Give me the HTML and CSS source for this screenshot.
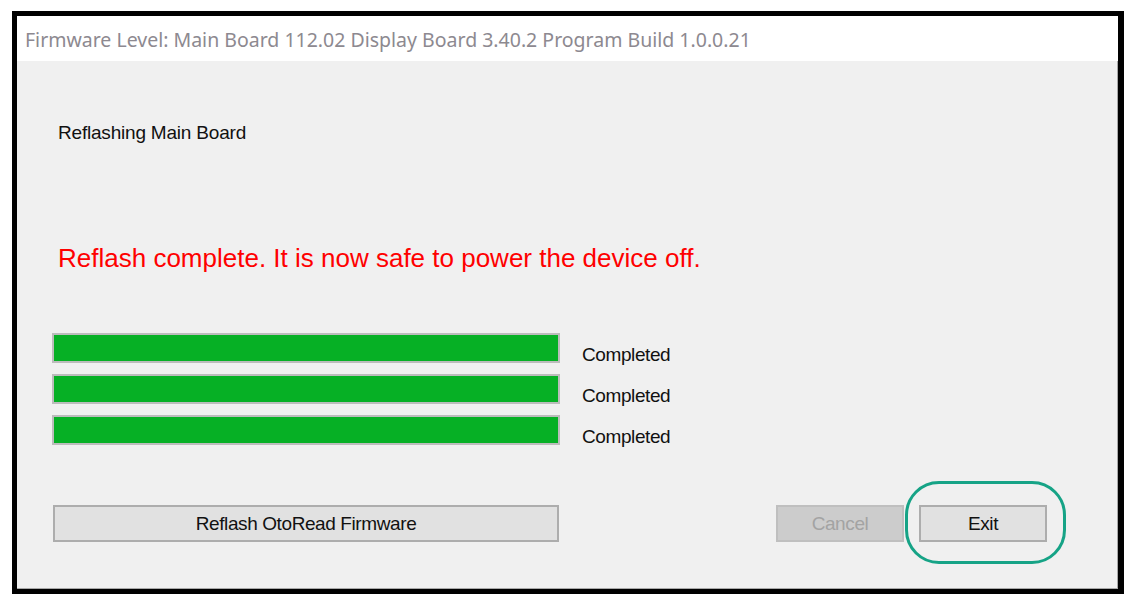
FILE: index.html
```html
<!DOCTYPE html>
<html lang="en">

<head>
    <meta charset="UTF-8" />
    <meta name="viewport" content="width=device-width, initial-scale=1.0" />
    <title>Firmware Reflash</title>
    <link rel="stylesheet" href="styles.css">
</head>

<body>
    <div class="frame">
        <div class="window">
            <div class="titlebar">Firmware Level: Main Board 112.02 Display Board 3.40.2 Program Build 1.0.0.21</div>
            <div class="content">
                <p class="status">Reflashing Main Board</p>
                <p class="done">Reflash complete. It is now safe to power the device off.</p>

                <div class="progress-list">
                    <div class="progress-row">
                        <div class="bar"><div class="fill" style="width: 100%"></div></div>
                        <span class="label">Completed</span>
                    </div>
                    <div class="progress-row">
                        <div class="bar"><div class="fill" style="width: 100%"></div></div>
                        <span class="label">Completed</span>
                    </div>
                    <div class="progress-row">
                        <div class="bar"><div class="fill" style="width: 100%"></div></div>
                        <span class="label">Completed</span>
                    </div>
                </div>

                <div class="actions">
                    <button class="btn btn-wide">Reflash OtoRead Firmware</button>
                    <div class="actions-right">
                        <button class="btn btn-small" disabled>Cancel</button>
                        <div class="highlight">
                            <button class="btn btn-small">Exit</button>
                            <span class="ring"></span>
                        </div>
                    </div>
                </div>
            </div>
        </div>
    </div>
</body>

</html>
```

FILE: styles.css
```css
html {
    -webkit-font-smoothing: antialiased;
    box-sizing: border-box;
    height: 100%;
}

*,
*:before,
*:after {
    box-sizing: inherit;
}

:root {
    --face: #f0f0f0;
    --green: #06b025;
    --teal: #16a386;
}

body {
    margin: 0;
    background: #fff;
    padding: 11px 0 0 12px;
    font-family: "Liberation Sans", Arial, sans-serif;
}

.frame {
    width: 1112px;
    height: 583px;
    border: 5px solid #000;
    border-right-width: 6px;
}

.window {
    height: 100%;
    display: flex;
    flex-direction: column;
}

.titlebar {
    height: 45px;
    background: #fff;
    padding-left: 8px;
    padding-top: 2px;
    line-height: 43px;
    font-family: "Noto Sans", "Open Sans", sans-serif;
    font-size: 19.5px;
    color: #8d8990;
    white-space: nowrap;
}

.content {
    flex: 1;
    background: var(--face);
    border-right: 1px solid #a8a8a8;
    border-bottom: 1px solid #a8a8a8;
    padding: 62px 0 0 35px;
}

.status {
    margin: 0 0 0 6px;
    font-size: 19px;
    line-height: 19px;
    letter-spacing: -0.2px;
    color: #111;
}

.done {
    margin: 103px 0 0 6px;
    font-size: 26px;
    line-height: 26px;
    color: #ff0000;
}

.progress-list {
    margin-top: 62px;
    display: flex;
    flex-direction: column;
    gap: 11px;
}

.progress-row {
    display: flex;
    align-items: flex-start;
    height: 30px;
}

.bar {
    width: 508px;
    height: 30px;
    border: 2px solid #bcbcbc;
    background: #e6e6e6;
}

.fill {
    height: 100%;
    background: var(--green);
}

.label {
    margin: 12px 0 0 22px;
    font-size: 19px;
    line-height: 19px;
    letter-spacing: -0.4px;
    color: #111;
}

.actions {
    margin-top: 60px;
    display: flex;
    align-items: center;
    padding-right: 70px;
}

.actions-right {
    margin-left: auto;
    display: flex;
    gap: 15px;
}

.btn {
    height: 37px;
    border: 2px solid #adadad;
    background: #e1e1e1;
    font-family: "Liberation Sans", Arial, sans-serif;
    font-size: 19px;
    letter-spacing: -0.4px;
    color: #111;
    padding: 0;
    outline: none;
}

.btn-wide {
    width: 506px;
    margin-left: 1px;
}

.btn-small {
    width: 128px;
}

.btn:disabled {
    background: #cccccc;
    border-color: #bfbfbf;
    color: #a3a3a3;
}

.highlight {
    position: relative;
}

.ring {
    position: absolute;
    left: -14px;
    right: -19px;
    top: -24px;
    bottom: -22px;
    border: 3px solid var(--teal);
    border-radius: 34px;
}
```
